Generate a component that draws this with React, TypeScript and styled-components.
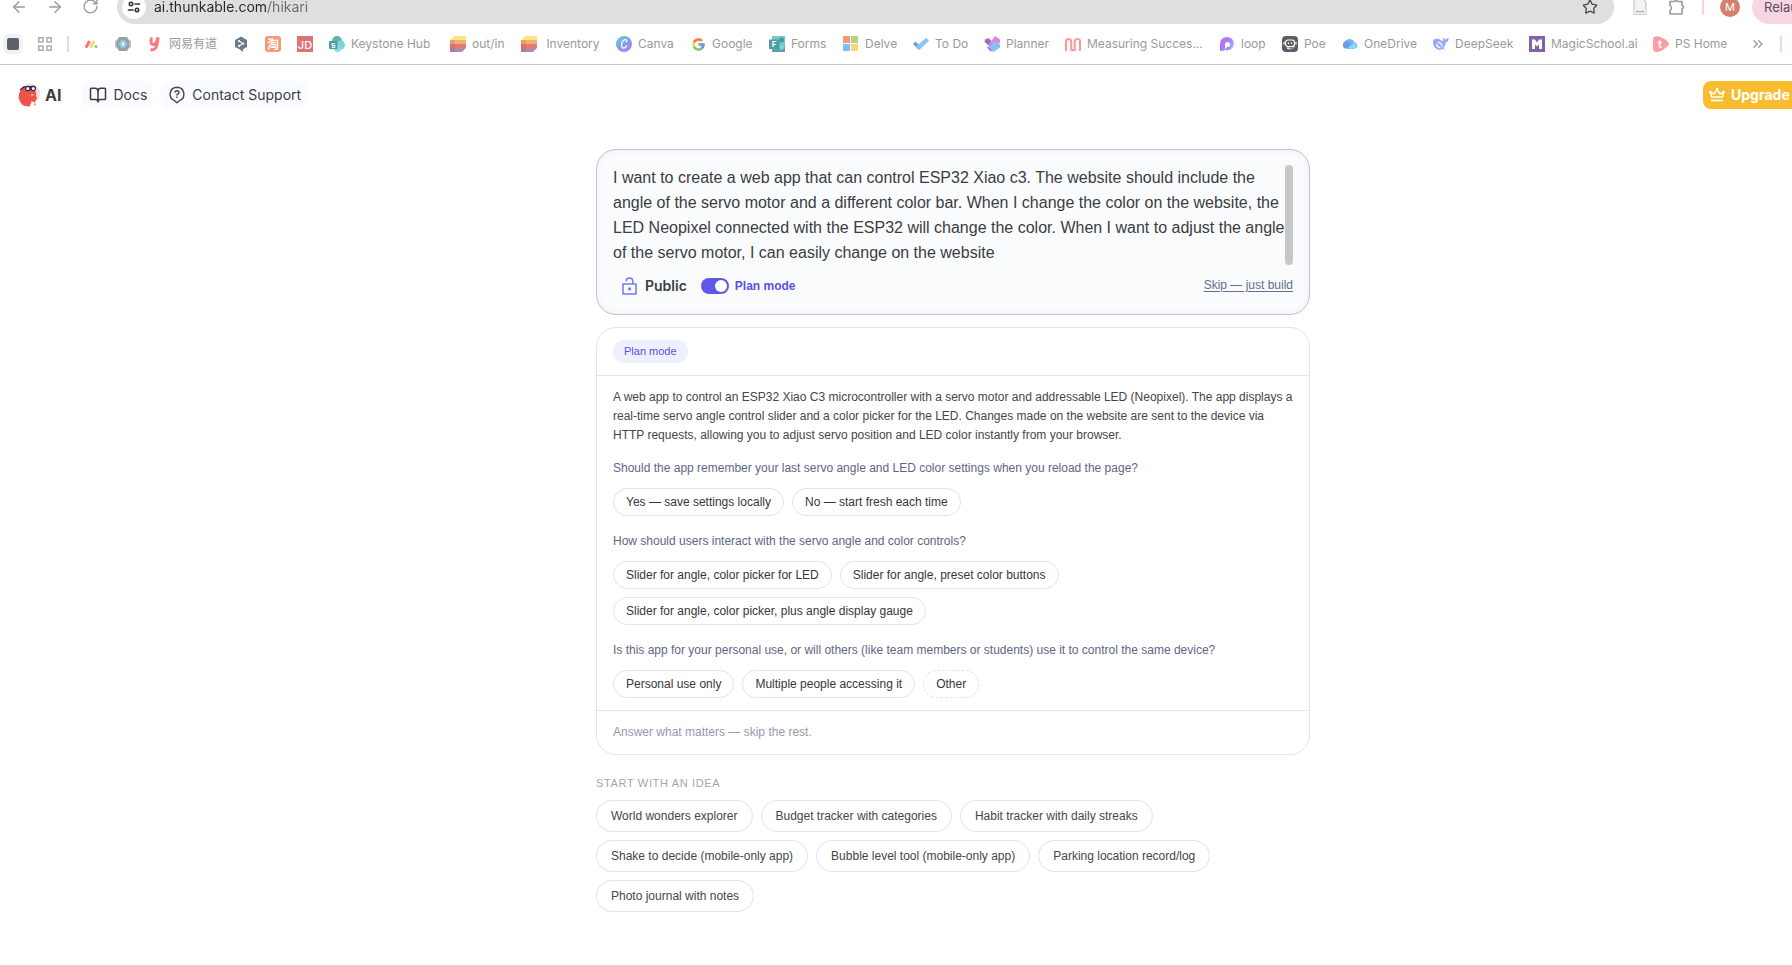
import React from "react";
import styled, { createGlobalStyle, css } from "styled-components";
import { ArrowLeft, ArrowRight, RotateCw, Star, BookOpen, ChevronsRight } from "lucide-react";
import { FcGoogle } from "react-icons/fc";

const sans = `"Liberation Sans", Arial, Helvetica, sans-serif`;
const ui = `Inter, "Noto Sans CJK SC", sans-serif`;

const GlobalStyle = createGlobalStyle`
  *, *::before, *::after { box-sizing: border-box; }
  body { margin: 0; background: #fff; font-family: ${sans}; color: #3b3d42; overflow-x: hidden; }
  button { font: inherit; color: inherit; cursor: pointer; }
  a { color: inherit; }
`;

/* ---------- browser chrome ---------- */

const Chrome = styled.div`
  overflow: hidden;
  border-bottom: 1px solid #cbcbcb;
  font-family: ${ui};
`;

const Toolbar = styled.div`
  display: flex;
  align-items: center;
  height: 34px;
  margin-top: -10px;
  padding-left: 10px;
`;

const NavButtons = styled.div`
  display: flex;
  gap: 18px;
  margin-right: 18px;
  color: #9b9b9b;
`;

const IconButton = styled.button`
  display: flex;
  padding: 0;
  border: 0;
  background: none;
`;

const AddressBar = styled.div`
  flex: 1;
  display: flex;
  align-items: center;
  gap: 8px;
  height: 34px;
  padding: 0 16px 0 5px;
  border-radius: 17px;
  background: #dfdfdf;
  color: #4a4a4a;
`;

const SiteInfo = styled(IconButton)`
  align-items: center;
  justify-content: center;
  width: 24px;
  height: 24px;
  border-radius: 50%;
  background: #fff;
`;

const AddressInput = styled.input`
  flex: 1;
  padding: 0;
  border: 0;
  outline: 0;
  font: 14px/20px ${ui};
  color: transparent;
  background: linear-gradient(90deg, #262626 113px, #6c6c6c 113px);
  background-clip: text;
`;

const ToolbarEnd = styled.div`
  display: flex;
  align-items: center;
  height: 34px;
  margin-left: 18px;
`;

const PinkRule = styled.span`
  flex: none;
  width: 2px;
  height: 16px;
  background: #f6d3e3;
`;

const Avatar = styled(IconButton)`
  align-items: center;
  justify-content: center;
  width: 20px;
  height: 20px;
  margin: 0 12px 0 16px;
  border-radius: 50%;
  background: #d6806b;
  color: #fff;
  font-size: 11px;
`;

const Relaunch = styled.button`
  width: 40px;
  height: 34px;
  padding: 0 0 0 12px;
  border: 0;
  border-radius: 17px 0 0 17px;
  background: #f7d5e4;
  color: #5a5055;
  font-size: 13px;
  text-align: left;
  overflow: hidden;
`;

const ToolIcons = styled.div`
  display: flex;
  align-items: center;
  gap: 20px;
  margin-right: 16px;
`;

const Bookmarks = styled.nav`
  display: flex;
  align-items: center;
  height: 40px;
  padding-left: 3px;
  white-space: nowrap;
  font-size: 12px;
  line-height: 16px;
  color: #9a9a9a;
`;

const TabGroup = styled(IconButton)`
  align-items: center;
  justify-content: center;
  width: 20px;
  height: 20px;
  margin-right: 14px;
  border-radius: 6px;
  background: #f0f2f3;
`;

const Bookmark = styled.a<{ $w: number }>`
  display: flex;
  flex: none;
  align-items: center;
  gap: 6px;
  width: ${(p) => p.$w}px;
  text-decoration: none;
  white-space: pre;
  svg { flex: none; }
`;

const BookmarkRule = styled.span`
  flex: none;
  display: flex;
  width: 16px;
`;

const MoreBookmarks = styled(IconButton)`
  flex: none;
  width: 30px;
`;

/* ---------- app header ---------- */

const Header = styled.header`
  display: flex;
  align-items: center;
  height: 60px;
  padding-left: 18px;
  overflow: hidden;
  font-family: ${ui};
`;

const Brand = styled.a`
  display: flex;
  align-items: center;
  gap: 3px;
  margin-right: 21px;
  text-decoration: none;
  font-size: 16px;
  line-height: 20px;
  font-weight: 700;
`;

const HeaderLink = styled.a`
  display: flex;
  align-items: center;
  gap: 6px;
  height: 28px;
  margin-right: 8px;
  padding: 0 6px 0 7px;
  border-radius: 8px;
  background: #fafbfe;
  font-size: 14px;
  line-height: 20px;
  text-decoration: none;
  white-space: nowrap;
`;

const Upgrade = styled.button`
  display: flex;
  align-items: center;
  gap: 6px;
  flex: none;
  width: 96px;
  height: 28px;
  margin: 0 -7px 0 auto;
  padding: 0 0 0 6px;
  border: 0;
  border-radius: 8px;
  background: #f9bc2f;
  color: #fff;
  font-size: 14px;
  line-height: 20px;
  font-weight: 700;
`;

/* ---------- main column ---------- */

const Main = styled.main`
  padding: 24px 0 52px 114px;
`;

const Column = styled.div`
  display: flex;
  flex-direction: column;
  gap: 12px;
  max-width: 714px;
  margin: 0 auto;
`;

const PromptCard = styled.form`
  padding: 15px 16px 11px;
  border: 1px solid #bcc0d6;
  border-radius: 20px;
  background: #fafbfd;
  box-shadow: inset 0 0 6px rgba(60, 70, 100, 0.07);
`;

const PromptScroll = styled.div`
  display: flex;
  height: 100px;
`;

const PromptText = styled.textarea`
  flex: 1;
  padding: 0;
  border: 0;
  outline: 0;
  resize: none;
  overflow: hidden;
  background: none;
  color: #3b3d42;
  font: 16px/25px ${sans};
`;

const ScrollThumb = styled.span`
  flex: none;
  width: 8px;
  border-radius: 4px;
  background: #c6c7c9;
`;

const PromptActions = styled.div`
  display: flex;
  align-items: center;
  height: 34px;
  margin-top: 4px;
  padding-left: 8px;
`;

const Visibility = styled.button`
  display: flex;
  align-items: center;
  gap: 6px;
  margin-right: 14px;
  padding: 0;
  border: 0;
  background: none;
  font: 600 14px/20px ${ui};
`;

const PlanToggle = styled.label`
  display: flex;
  align-items: center;
  gap: 6px;
  color: #5b50e5;
  font-size: 12px;
  font-weight: 700;
  cursor: pointer;
`;

const Switch = styled.input`
  appearance: none;
  display: flex;
  align-items: center;
  justify-content: flex-start;
  width: 28px;
  height: 16px;
  margin: 0;
  padding: 0 2px;
  border-radius: 8px;
  background: #c9cbd6;
  &::before {
    content: "";
    width: 12px;
    height: 12px;
    border-radius: 50%;
    background: #fff;
  }
  &:checked { background: #6157e6; justify-content: flex-end; }
`;

const Skip = styled.a`
  margin-left: auto;
  padding-bottom: 2px;
  color: #676e8b;
  font-size: 12px;
  line-height: 19px;
  text-underline-offset: 2px;
`;

const PlanCard = styled.section`
  border: 1px solid #e4e4e9;
  border-radius: 20px;
`;

const PlanHead = styled.div`
  padding: 12px 16px;
  border-bottom: 1px solid #e4e4e9;
`;

const PlanBadge = styled.span`
  display: block;
  width: fit-content;
  padding: 0 11px;
  border-radius: 12px;
  background: #eeefff;
  color: #5b50e5;
  font-size: 11px;
  line-height: 23px;
`;

const PlanBody = styled.div`
  padding: 12px 16px;
  font-size: 12px;
  line-height: 19px;
`;

const Summary = styled.p`
  margin: 0 0 14px;
  color: #44464c;
`;

const Question = styled.fieldset`
  min-width: 0;
  margin: 0;
  padding: 0;
  border: 0;
  & + & { margin-top: 16px; }
`;

const Legend = styled.legend`
  padding: 0 0 10px;
  color: #5f6684;
`;

const Chips = styled.div`
  display: flex;
  flex-wrap: wrap;
  gap: 8px;
`;

const Chip = styled.button<{ $idea?: boolean; $dashed?: boolean }>`
  height: 28px;
  padding: 0 12px;
  border: 1px ${(p) => (p.$dashed ? "dashed" : "solid")} #e3e3e8;
  border-radius: 16px;
  background: #fff;
  color: #35373b;
  font-size: 12px;
  line-height: 19px;
  white-space: nowrap;
  ${(p) => p.$idea && css`
    height: 32px;
    padding: 0 14px;
    color: #44464c;
  `}
`;

const PlanFoot = styled.div`
  padding: 12px 16px;
  border-top: 1px solid #e4e4e9;
  color: #9699aa;
  font-size: 12px;
  line-height: 19px;
`;

const Ideas = styled.section`
  padding-top: 8px;
`;

const IdeasTitle = styled.h2`
  margin: 0 0 8px;
  color: #a3a5b1;
  font-size: 11px;
  font-weight: 400;
  line-height: 17px;
  letter-spacing: 0.06em;
`;

/* ---------- icons ---------- */

const Svg = ({ s = 16, children, box = 16 }: { s?: number; box?: number; children: React.ReactNode }) => (
  <svg width={s} height={s} viewBox={`0 0 ${box} ${box}`} fill="none" aria-hidden="true">{children}</svg>
);

const glyph = (ch: string, size: number, x = 8, y = 12, extra = {}) => (
  <text x={x} y={y} fill="#fff" fontSize={size} fontWeight="700" textAnchor="middle" fontFamily={ui} {...extra}>{ch}</text>
);

const TuneIcon = () => (
  <Svg s={14} box={14}>
    <g stroke="#333" strokeWidth="1.6" strokeLinecap="round">
      <circle cx="4" cy="4" r="1.7" /><path d="M8 4h4.5" />
      <circle cx="10" cy="10" r="1.7" /><path d="M1.500 10H6" />
    </g>
  </Svg>
);

const PuzzleIcon = () => (
  <Svg s={18} box={18}>
    <path d="M2 3.500h4.500q1.500-2 3 0H14v3.800q3 1.700 0 3.400v5.300H2v-3.500q3-2.500 0-5z" stroke="#9a9a9a" strokeWidth="1.600" strokeLinejoin="round" />
  </Svg>
);

const ReaderIcon = () => (
  <Svg>
    <path d="M2 0h9l3 3V15.500H2z" fill="#f4f4f4" stroke="#b8b8b8" />
    <path d="M2 11h12v4.500H2z" fill="#ededed" /><path d="M4 12.500h8" stroke="#aaa" />
  </Svg>
);

const AppsGrid = () => (
  <Svg>
    <g stroke="#adadad" strokeWidth="1.500">
      <path d="M1.700 1.700h4.300v4.300H1.700zM10 1.700h4.300v4.300H10zM1.700 10h4.300v4.300H1.700zM10 10h4.300v4.300H10z" />
    </g>
  </Svg>
);

const Monday = () => (
  <Svg>
    <g strokeWidth="3" strokeLinecap="round">
      <path d="M3.500 10.500 6 6" stroke="#f5718a" /><path d="M8 10.500 10.500 6" stroke="#ffd75e" />
      <path d="M13 10.500v0" stroke="#5cd893" />
    </g>
  </Svg>
);

const Hexagons = () => (
  <Svg>
    <path d="M0 4.500h16v7H0z" fill="#c2c4c5" />
    <path d="M4 1h8l2.500 4v6L12 15H4l-2.500-4V5z" fill="#9da0a2" />
    <path d="M6.800 3.500 3.500 8l3.300 4.500L8 11 6.500 8 8 5zM9.200 3.500 12.500 8l-3.300 4.500L8 11l1.500-3L8 5z" fill="#7fd3ee" />
    <path d="M8 5 6.500 8 8 11 9.500 8z" fill="#e8f7fc" />
  </Svg>
);

const Youdao = () => (
  <Svg><path d="M4.500 1.500C3.500 5.500 3.800 8.500 6.300 8.500S10 5.500 10.800 1.500M11.300 1.500 9.800 9C9 13 6.800 14.500 3.500 13.500" stroke="#f97b80" strokeWidth="3" /></Svg>
);

const DeepL = () => (
  <Svg>
    <path d="M8 .5 14 4v7l-4 2.300V16l-3-2.400L2 11V4z" fill="#6f7b8b" />
    <path d="m6 5 4 2.500L6 10" stroke="#fff" strokeWidth="1.100" />
    <g fill="#fff"><circle cx="6" cy="5" r="1.100" /><circle cx="10.300" cy="7.500" r="1.100" /><circle cx="6" cy="10" r="1.100" /></g>
  </Svg>
);

const Taobao = () => (
  <Svg>
    <rect width="16" height="16" rx="3" fill="#f79a74" />
    {glyph("淘", 12, 8, 12.5, { fontFamily: '"Noto Sans CJK SC", sans-serif' })}
  </Svg>
);

const JD = () => (
  <Svg><rect width="16" height="16" fill="#de7377" />{glyph("JD", 11, 8, 13, { fontWeight: 500 })}</Svg>
);

const SharePoint = () => (
  <Svg>
    <circle cx="8" cy="5" r="5" fill="#5fb3b9" /><circle cx="11.500" cy="9" r="4.500" fill="#7ad4da" />
    <circle cx="8.500" cy="12.500" r="3.500" fill="#8adbe2" />
    <rect y="5" width="8.500" height="8" rx="1" fill="#4a9ea5" />{glyph("s", 8, 4.3, 11.500)}
  </Svg>
);

const Sheets = () => (
  <Svg>
    <path d="M4 0h12v4H0z" fill="#fde585" /><path d="M0 4h16v4H0z" fill="#f4ae79" /><path d="M0 8h16v4H0z" fill="#e07f6f" />
    <path d="M0 12h16l-4 4H0z" fill="#b587a8" /><path d="M0 4h5v12H0z" fill="#a33" opacity=".14" />
  </Svg>
);

const Canva = () => (
  <Svg>
    <defs><linearGradient id="cv" x1="0" y1="0" x2=".8" y2="1"><stop stopColor="#63d6dc" /><stop offset=".55" stopColor="#7fa0ea" /><stop offset="1" stopColor="#b47bf0" /></linearGradient></defs>
    <circle cx="8" cy="8" r="8" fill="url(#cv)" />
    <path d="M10.500 5.800C11.500 4 9.500 3 7.800 4.200 5.200 6 4.500 11.800 7.300 12c1.500.1 2.700-1 3.400-2.200" stroke="#fff" strokeWidth="1.300" strokeLinecap="round" />
  </Svg>
);

const Google = () => <FcGoogle size={15} opacity={0.7} aria-hidden="true" />;

const Forms = () => (
  <Svg>
    <path d="M3 0h13v16H3z" fill="#6fcbd0" /><path d="M3 11h13v5H3z" fill="#5ba5aa" />
    <circle cx="12.500" cy="4" r="2.500" fill="#4b9aa1" /><rect x="11" y="9.500" width="3.500" height="4" fill="#87d7da" />
    <path d="M0 3.500h10.500V13H0z" fill="#4f9ea4" />{glyph("F", 8, 5, 11)}
  </Svg>
);

const Microsoft = () => (
  <Svg>
    <path d="M0 0h7v7H0z" fill="#f9957a" /><path d="M8 0h7v7H8z" fill="#b1d67a" />
    <path d="M0 8h7v7H0z" fill="#78c2f3" /><path d="M8 8h7v7H8z" fill="#fdd37b" />
  </Svg>
);

const ToDo = () => (
  <Svg>
    <path d="m0 8 2.500-2.500L8 10.800 5.300 13.500z" fill="#7b96d4" />
    <path d="M5.300 13.500 2.700 11 13 1.800 16 4.500 7 13.500q-.9.700-1.700 0z" fill="#85c6f5" />
  </Svg>
);

const Planner = () => (
  <Svg>
    <path d="M1 3.500 4.500 2l7 7L8 12 .6 6z" fill="#9a70c0" /><path d="m5 8 6-8 5 3.500v3L9 13z" fill="#dd88de" />
    <path d="m4.500 11.500 7-6.500L16 8.500v3L9.500 16z" fill="#85c3f4" /><path d="m4 10 5 5.500-3-.5-3-3.500z" fill="#8a86d8" />
  </Svg>
);

const Measuring = () => (
  <Svg>
    <path d="M1 15V5.500Q1 3 3.500 3T6.300 5.500V14H9.700V5.500Q9.700 3 12.500 3T15 5.500V15" stroke="#f99a95" strokeWidth="2" />
  </Svg>
);

const Loop = () => (
  <Svg>
    <defs><linearGradient id="lp" x1="0" y1=".6" x2="1" y2="1"><stop stopColor="#b271f3" /><stop offset=".55" stopColor="#a48af5" /><stop offset="1" stopColor="#8be4f5" /></linearGradient></defs>
    <path d="M1 15V8a7 6.800 0 1 1 7 6.500q-1.500 0-2-.7-1 1.200-5 1.200z" fill="url(#lp)" /><path d="M6 14V8.500a2.500 2.500 0 1 1 2.500 2.500Q7 11 6 14z" fill="#fff" />
  </Svg>
);

const Poe = () => (
  <Svg>
    <rect width="16" height="16" rx="4" fill="#5d5d5f" /><path d="M6 13q5 0 7-3" stroke="#a77bd8" strokeWidth="1.500" />
    <rect x="3.500" y="4" width="9" height="6.500" rx="2.500" fill="#5d5d5f" stroke="#fff" strokeWidth="1.200" />
    <path d="M2 6v2.500M14 6v2.500M6.500 6.500v1.500M9.500 6.500v1.500M5 12.200h3" stroke="#fff" strokeWidth="1.200" />
  </Svg>
);

const OneDrive = () => (
  <Svg>
    <path d="M4 12.500A4 4 0 0 1 2.500 5.500Q5 2 9 3.200q3 1 3.500 3.300a3 3 0 0 1-.5 6z" fill="#71b7f5" />
    <path d="M1 10Q1 6 4.500 5.300 7 5 13 12.500H4Q1 12 1 10z" fill="#6d9bec" /><path d="M5 12.500 12.200 6.500a3.200 3.200 0 0 1 .3 6z" fill="#7fdcf8" />
  </Svg>
);

const DeepSeek = () => (
  <Svg>
    <path d="M0 6q0-3.500 4-3.500 3 0 5 2.500l1.500-.5L9.500 2q2 0 2.500 1.500 1.500 0 2.500-1.500l1.300.5q-.5 3.500-3 4-.3 3.500-2.300 5.200l1.500 1.800-2.500-.5Q6 15 3 12.500 0 10 0 6z" fill="#9aa6fb" />
    <path d="M4.500 6.500q3-.5 5 4M3.500 8q1 3.500 4 4" stroke="#fff" strokeWidth="1.200" />
  </Svg>
);

const MagicSchool = () => (
  <Svg><path d="M0 0h16v16H0z" fill="#8462a8" /><path d="M3 3.500h3l2 3 2-3h3v9.500h-3V8.500L8 10.500l-2-2V13H3z" fill="#fff" /></Svg>
);

const Toddle = () => (
  <Svg><path d="M0 4Q0-1 6 .5 15 4 16 7.500q0 2.500-8 7.500Q0 18 0 12z" fill="#fd9ba6" />{glyph("t", 11, 7, 12)}</Svg>
);

const Logo = () => (
  <Svg s={24} box={24}>
    <circle cx="12" cy="10.500" r="10" fill="#f9d8da" />
    <path d="M3 7Q8 2.500 14 5q5 2.500 4 8 2 3-1 5l.5 5-4-4-2 4.500Q3 24 1 16 0 11 3 7z" fill="#ee5347" />
    <path d="M2 7 6 4l11-.5" stroke="#2c2450" strokeWidth="1.500" />
    <circle cx="9.800" cy="5.500" r="2.200" fill="#fff" stroke="#2c2450" strokeWidth="1.200" /><circle cx="15.300" cy="5.500" r="2.200" fill="#fff" stroke="#2c2450" strokeWidth="1.200" />
    <path d="m13 18 2.500 5 1.500-3.500z" fill="#fff" /><path d="M13 12h3" stroke="#f9d8da" />
  </Svg>
);

const HelpIcon = () => (
  <Svg s={18} box={18}>
    <path d="M9 1.200a6.900 6.900 0 0 1 3 13.100L9 16.800l-3-2.500A6.900 6.900 0 0 1 9 1.200z" stroke="#44464c" strokeWidth="1.400" strokeLinejoin="round" />
    <path d="M7 6.500Q7 4.700 9 4.700t2 1.700Q11 7.500 9 8.500v1M9 10.500V12" stroke="#44464c" strokeWidth="1.400" />
  </Svg>
);

const CrownIcon = () => (
  <Svg>
    <path d="m2.500 10-1-5 3.500 2 3-4.500L11 7l3.500-2-1 5zM2 13.500h12" stroke="#fff" strokeWidth="1.500" strokeLinejoin="round" />
    <g fill="#fff"><circle cx="8" cy="2" r="1.300" /><circle cx="1.300" cy="5" r="1.300" /><circle cx="14.700" cy="5" r="1.300" /></g>
  </Svg>
);

const UnlockIcon = () => (
  <Svg s={18} box={18}>
    <path d="M2 7h13v10H2zM5.200 4.500Q5.200 1 8.500 1t3.300 3.500V7" stroke="#6f7cf2" strokeWidth="1.500" strokeLinejoin="round" />
    <rect x="7.200" y="10.500" width="2.800" height="2.800" fill="#6f7cf2" />
  </Svg>
);

/* ---------- data ---------- */

const bookmarks: { label: string; icon: () => React.ReactElement; width: number; iconOnly?: boolean }[] = [
  { label: "Monday", icon: Monday, width: 32, iconOnly: true },
  { label: "Hexagons", icon: Hexagons, width: 32, iconOnly: true },
  { label: "网易有道", icon: Youdao, width: 86 },
  { label: "DeepL", icon: DeepL, width: 32, iconOnly: true },
  { label: "Taobao", icon: Taobao, width: 32, iconOnly: true },
  { label: "JD", icon: JD, width: 32, iconOnly: true },
  { label: "Keystone Hub", icon: SharePoint, width: 121 },
  { label: "out/in", icon: Sheets, width: 71 },
  { label: " Inventory", icon: Sheets, width: 95 },
  { label: "Canva", icon: Canva, width: 75 },
  { label: "Google", icon: Google, width: 78 },
  { label: "Forms", icon: Forms, width: 74 },
  { label: "Delve", icon: Microsoft, width: 70 },
  { label: "To Do", icon: ToDo, width: 71 },
  { label: "Planner", icon: Planner, width: 81 },
  { label: "Measuring Succes...", icon: Measuring, width: 154 },
  { label: "loop", icon: Loop, width: 63 },
  { label: "Poe", icon: Poe, width: 60 },
  { label: "OneDrive", icon: OneDrive, width: 91 },
  { label: "DeepSeek", icon: DeepSeek, width: 96 },
  { label: "MagicSchool.ai", icon: MagicSchool, width: 124 },
  { label: "PS Home", icon: Toddle, width: 97 },
];

const questions = [
  {
    text: "Should the app remember your last servo angle and LED color settings when you reload the page?",
    options: ["Yes — save settings locally", "No — start fresh each time"],
  },
  {
    text: "How should users interact with the servo angle and color controls?",
    options: [
      "Slider for angle, color picker for LED",
      "Slider for angle, preset color buttons",
      "Slider for angle, color picker, plus angle display gauge",
    ],
  },
  {
    text: "Is this app for your personal use, or will others (like team members or students) use it to control the same device?",
    options: ["Personal use only", "Multiple people accessing it", "Other"],
  },
];

const ideas = [
  "World wonders explorer",
  "Budget tracker with categories",
  "Habit tracker with daily streaks",
  "Shake to decide (mobile-only app)",
  "Bubble level tool (mobile-only app)",
  "Parking location record/log",
  "Photo journal with notes",
];

const prompt =
  "I want to create a web app that can control ESP32 Xiao c3. The website should include the angle of the servo motor and a different color bar. When I change the color on the website, the LED Neopixel connected with the ESP32 will change the color. When I want to adjust the angle of the servo motor, I can easily change on the website";

export default function App() {
  return (
    <>
      <GlobalStyle />
      <Chrome>
        <Toolbar>
          <NavButtons>
            <IconButton aria-label="Back"><ArrowLeft size={18} strokeWidth={2} /></IconButton>
            <IconButton aria-label="Forward"><ArrowRight size={18} strokeWidth={2} /></IconButton>
            <IconButton aria-label="Reload"><RotateCw size={17} strokeWidth={2} /></IconButton>
          </NavButtons>
          <AddressBar>
            <SiteInfo aria-label="Site information"><TuneIcon /></SiteInfo>
            <AddressInput aria-label="Address" defaultValue="ai.thunkable.com/hikari" />
            <IconButton aria-label="Bookmark this page"><Star size={16} /></IconButton>
          </AddressBar>
          <ToolbarEnd>
            <ToolIcons>
              <IconButton aria-label="Reading list"><ReaderIcon /></IconButton>
              <IconButton aria-label="Extensions"><PuzzleIcon /></IconButton>
            </ToolIcons>
            <PinkRule />
            <Avatar aria-label="Profile">M</Avatar>
            <Relaunch>Relaunch</Relaunch>
          </ToolbarEnd>
        </Toolbar>
        <Bookmarks aria-label="Bookmarks">
          <TabGroup aria-label="Tab group">
            <Svg s={12} box={12}><rect width="12" height="12" rx="2" fill="#5f6169" /></Svg>
          </TabGroup>
          <Bookmark href="#apps" aria-label="Apps" $w={30}><AppsGrid /></Bookmark>
          <BookmarkRule><PinkRule /></BookmarkRule>
          {bookmarks.map(({ label, icon: Icon, width, iconOnly }) => (
            <Bookmark key={label} href="#bookmark" aria-label={label.trim()} $w={width}>
              <Icon />
              {!iconOnly && <span>{label}</span>}
            </Bookmark>
          ))}
          <MoreBookmarks aria-label="More bookmarks"><ChevronsRight size={16} /></MoreBookmarks>
          <PinkRule />
        </Bookmarks>
      </Chrome>

      <Header>
        <Brand href="#home"><Logo />AI</Brand>
        <HeaderLink href="#docs"><BookOpen size={18} strokeWidth={2} />Docs</HeaderLink>
        <HeaderLink href="#support"><HelpIcon />Contact Support</HeaderLink>
        <Upgrade><CrownIcon />Upgrade</Upgrade>
      </Header>

      <Main>
        <Column>
          <PromptCard onSubmit={(e) => e.preventDefault()}>
            <PromptScroll>
              <PromptText aria-label="Describe your app" defaultValue={prompt} />
              <ScrollThumb aria-hidden="true" />
            </PromptScroll>
            <PromptActions>
              <Visibility type="button"><UnlockIcon />Public</Visibility>
              <PlanToggle>
                <Switch type="checkbox" role="switch" defaultChecked />
                Plan mode
              </PlanToggle>
              <Skip href="#build">Skip — just build</Skip>
            </PromptActions>
          </PromptCard>

          <PlanCard>
            <PlanHead><PlanBadge>Plan mode</PlanBadge></PlanHead>
            <PlanBody>
              <Summary>
                A web app to control an ESP32 Xiao C3 microcontroller with a servo motor and addressable LED (Neopixel). The app displays a real-time servo angle control slider and a color picker for the LED. Changes made on the website are sent to the device via HTTP requests, allowing you to adjust servo position and LED color instantly from your browser.
              </Summary>
              {questions.map((q) => (
                <Question key={q.text}>
                  <Legend>{q.text}</Legend>
                  <Chips>
                    {q.options.map((o) => (
                      <Chip key={o} type="button" $dashed={o === "Other"}>{o}</Chip>
                    ))}
                  </Chips>
                </Question>
              ))}
            </PlanBody>
            <PlanFoot>Answer what matters — skip the rest.</PlanFoot>
          </PlanCard>

          <Ideas>
            <IdeasTitle>START WITH AN IDEA</IdeasTitle>
            <Chips>
              {ideas.map((idea) => <Chip key={idea} type="button" $idea>{idea}</Chip>)}
            </Chips>
          </Ideas>
        </Column>
      </Main>
    </>
  );
}
